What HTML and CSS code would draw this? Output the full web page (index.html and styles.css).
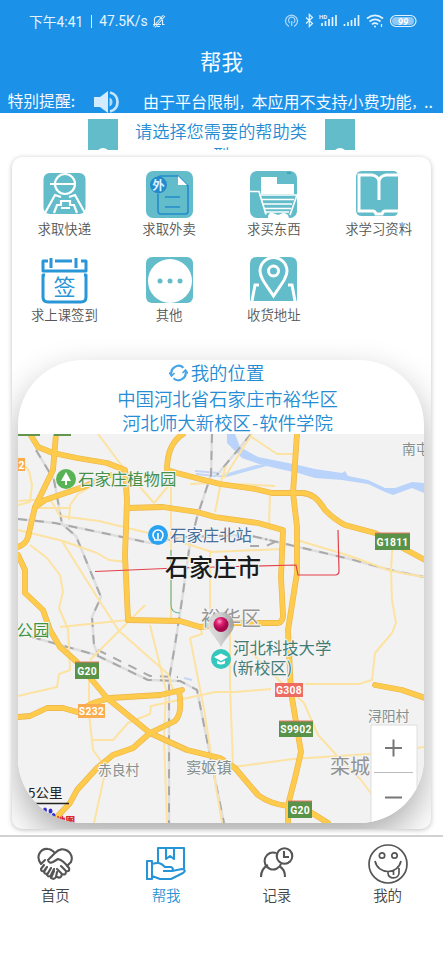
FILE: index.html
```html
<!DOCTYPE html>
<html lang="zh-CN">
<head>
<meta charset="utf-8">
<meta name="viewport" content="width=device-width, initial-scale=1">
<title>帮我</title>
<link rel="stylesheet" href="styles.css">
</head>
<body>
<div class="app">
  <header class="header">
    <div class="status">
      <span class="status-time">下午4:41</span><span class="status-bar"></span><span class="status-time">47.5K/s</span>
      <svg class="mute" width="15" height="16" viewBox="0 0 15 16" fill="none" stroke="#e3f2ff" stroke-width="1.1"><path d="M2 11.5h8M3.5 11V6.5C3.500 2.500 10.500 2.500 10.500 6M11.500 7v4.500h2M6 13.500h3M12.500 2 2.500 13.500M14 3 4 14.500"/></svg>
      <div class="status-right">
        <svg width="133" height="16" viewBox="284 13 133 16" fill="none" stroke="#e3f2ff" stroke-width="1.2">
          <g opacity=".75"><path d="M289 26.500a6 6 0 1 1 5 0M290 23a3.200 3.200 0 1 1 3.500 0M291.700 21v5"/></g>
          <path d="m306 17.500 6.500 6-3.200 3V14.500l3.200 3-6.500 6"/>
          <text class="hd" x="319" y="18.500">HD</text>
          <path stroke-width="1.7" d="M322 26v-3M325.500 26v-5M329 26v-7M332.500 26v-9M336 26v-11M344.500 26v-2M348 26v-4M351.500 26v-6M355 26v-8M358.500 26v-11"/>
          <path stroke-width="1.7" d="M367 18.500c5-4 11-4 16 0M369.500 21.500c4-3 7.500-3 11 0M372 24.300c2-1.600 4-1.600 6 0"/><path d="M375 26.500v.1" stroke-width="2" stroke-linecap="round"/><path d="M381.500 24v3" />
          <rect x="390.500" y="15.500" width="25.500" height="11" rx="5.500"/><rect x="392" y="17" width="22" height="8" rx="4" fill="#8fc8f5" stroke="none"/>
          <text class="pct" x="403" y="25">99</text>
        </svg>
      </div>
    </div>
    <h1 class="title">帮我</h1>
    <div class="notice">
      <span class="notice-label">特别提醒:</span>
      <svg class="speaker" width="27" height="24" viewBox="0 0 27 24"><path d="M1 7h6l8-6v22l-8-6H1z" fill="#d3ebff"/><path d="M16.500 7.500v9c4-1.500 4-7.500 0-9z" fill="#b4dcfb"/><path d="M17 2.500c10 2.500 10 16.500 0 19" fill="none" stroke="#c5e4fd" stroke-width="2.800"/></svg>
      <span class="notice-text">由于平台限制<i>，</i>本应用不支持小费功能<i>，</i>..</span>
    </div>
  </header>

  <section class="prompt">
    <svg width="30" height="31" viewBox="0 0 30 31"><path d="M0 0h30v31H20q-5-4-10 0H0z" fill="#63bcca"/></svg>
    <p class="prompt-text">请选择您需要的帮助类型</p>
    <svg width="30" height="31" viewBox="0 0 30 31"><path d="M0 0h30v31H20q-5-4-10 0H0z" fill="#63bcca"/></svg>
  </section>

  <main class="card">
    <div class="grid">
      <div class="item">
        <svg width="47" height="47" viewBox="0 0 47 47"><rect x="2.500" y="2" width="42" height="41" rx="6" fill="#63bcca"/><g fill="none" stroke="#fff" stroke-width="2.200"><circle cx="24" cy="13" r="10"/><path d="M9 13h25M4 42l10-18 6 2M44 42 34 24l-6 2M13 42l3-8h4v-4h9v4h4l3 8M20 37h9"/></g></svg>
        <span>求取快递</span>
      </div>
      <div class="item">
        <svg width="47" height="47" viewBox="0 0 47 47"><rect width="47" height="47" rx="7" fill="#63bcca"/><g fill="none" stroke="#238bcc" stroke-width="1.600"><path d="M12 23v17q0 3 3 3h24q3 0 3-3V15L32 5H15q-3 0-3 3M19 26h15M19 36h15"/></g><path d="M32 5v9h9z" fill="#fff"/><circle cx="12.500" cy="14" r="8.500" fill="#238bcc"/><text class="out" x="12.500" y="18.500">外</text></svg>
        <span>求取外卖</span>
      </div>
      <div class="item">
        <svg width="47" height="47" viewBox="0 0 47 47"><rect width="47" height="47" rx="7" fill="#63bcca"/><path d="M11 6h16v7h17v10H11zM18 47q0-6 5-5l5 2 5-2q5 0 6 5z" fill="#fff"/><g fill="none" stroke="#fff" stroke-width="1.700"><path d="M0 20.500h9l7 23M9 24h38l-7 20M12 28.500h32M13 33h29M14 37.500h27M16 41h23"/></g><path d="M37 2h4" stroke="#238a9b"/></svg>
        <span>求买东西</span>
      </div>
      <div class="item">
        <svg width="47" height="47" viewBox="0 0 47 47"><path d="M7 0h31q5 0 5 5v35q0 5-5 5H7q-6 0-6-6V6q0-6 6-6z" fill="#63bcca"/><g fill="none" stroke="#fff"><path stroke-width="3" d="M24 29V10Q23 5 17 4H4v36h14q2 0 3 3h6q1-3 3-3h14M24 10q1-5 7-6h13"/></g></svg>
        <span>求学习资料</span>
      </div>
      <div class="item">
        <svg width="47" height="47" viewBox="0 0 47 47"><g fill="none" stroke="#2896d7" stroke-width="3" stroke-linejoin="round"><path d="M7 4H2v10h43V4h-5M14 4h17M10 1v10M35 1v10M4 18H2v22q0 5 5 5h33q5 0 5-5V18h-2"/></g><text class="sign" x="23.500" y="38">签</text></svg>
        <span>求上课签到</span>
      </div>
      <div class="item">
        <svg width="47" height="47" viewBox="0 0 47 47"><rect y="0" width="47" height="46" rx="6" fill="#63bcca"/><circle cx="24" cy="24" r="22" fill="#fff"/><g fill="#63bcca"><circle cx="14" cy="24" r="2.500"/><circle cx="24" cy="24" r="2.500"/><circle cx="34" cy="24" r="2.500"/></g></svg>
        <span>其他</span>
      </div>
      <div class="item">
        <svg width="47" height="47" viewBox="0 0 47 47"><path d="M7 0h33q7 0 7 7v37H0V7q0-7 7-7z" fill="#63bcca"/><g fill="none" stroke="#fff"><path stroke-width="3" d="M23.500 39C14 25 10 20 10 14a13.500 13.500 0 0 1 27 0c0 6-4 11-13.500 25z"/><circle cx="23.500" cy="14" r="5" stroke-width="3"/><path stroke-width="3" d="M9 28H5L2 44M38 28h4l3 16"/></g></svg>
        <span>收货地址</span>
      </div>
    </div>

    <section class="location">
      <div class="address">
        <div class="address-head"><svg width="19" height="18" viewBox="0 0 19 18" fill="none" stroke="#45a5e8" stroke-width="2.100"><path d="M2.800 11.500A7.200 7.200 0 0 1 14.500 3.800M16.200 6.500A7.200 7.200 0 0 1 4.500 14.200"/><path d="m0 8.500 2.500 3.500 3-3M19 9.500 16.500 6l-3 3" stroke-width="1.500"/></svg>我的位置</div>
        <div>中国河北省石家庄市裕华区</div>
        <div>河北师大新校区<span class="dash">-</span>软件学院</div>
      </div>
      <svg class="map" width="406" height="389" viewBox="18 434 406 389">
        <rect x="18" y="434" width="406" height="389" fill="#f2f2f2"/>
        <path class="water" d="M227 434h8l5 13 18 10 40 8 17 4 27 4 3-2 3 5 20 4 17 8h10l17-6 12 1v10l-12-5-19 7-8-3-17-8-26-4-27-2-17-5-36-8-20-7-15-15z"/>
        <path d="M215 477l20-6 21-6 18-1-22 6-25 7z" fill="#bed6fa"/><path d="M195 471l24 2-4 3-19-2M184 678l8 2" stroke="#c6d5f5" stroke-width="2" fill="none"/>
        <g class="rail-bg">
          <path d="M36 450 54 480 59 507 62 524 76 536 101 597 92 617 94 645 98 655"/>
          <path d="M18 519 55 523 127 538 150 543 185 537 248 535 290 545 350 559 390 570 424 577"/>
          <path d="M212 434 211 475 197 517 189 550 182 600 175 645 169 680 169 823"/>
          <path d="M32 637 96 655 148 680 180 681 197 690 212 765 224 823"/>
          <path d="M251 434 217 475"/>
        </g>
        <g class="rail-dash">
          <path d="M36 450 54 480 59 507 62 524 76 536 101 597 92 617 94 645 98 655"/>
          <path d="M18 519 55 523 127 538 150 543 185 537 248 535 290 545 350 559 390 570 424 577"/>
          <path d="M212 434 211 475 197 517 189 550 182 600 175 645 169 680 169 823"/>
          <path d="M32 637 96 655 148 680 180 681 197 690 212 765 224 823"/>
          <path d="M251 434 217 475M98 650 150 676 178 677M250 546h16l9-4-10-3"/>
        </g>
        <g class="minor">
          <path d="M98 434 125 470 154 503M18 458 29 471 32 485 30 502 18 505M18 501 50 499 60 516 99 521 165 537 212 552 282 549M36 508h35M110 476 78 494 70 505 69 520M18 530 63 541 97 553 109 560 127 562M62 541 97 597 119 631M30 545 47 558 60 575 63 592 59 608 68 629 70 670 59 674 57 687 18 696M154 503 171 483 171 550M210 550V615M60 627 128 620M118 630 168 674 173 690"/>
          <path d="M190 484l20-1 65 3M226 466l-4 12-7 34M250 436l27 18h17M270 495l-1 32M252 434l-28 44M297 540l53 16 41 15 33 6M391 570l1 30 4 23-4 10-17 20-3 27-13 4H305M391 570l2-35"/>
          <path d="M90 660 119 631 145 605M171 550v70M150 625l16 65-2 48 3 85M89 668v45l4 37 13 18-12 55M93 740h20l15-17 22-9 1-8 64-14h20l36-3M190 638l14 71 12 78 6 36M190 638l12-4-2-8M230 625v60l3 81-20-1M233 767l60-8 76-5 55-7M249 650l30 30 25 23 14 32 23 25 20 20 24 32"/>
        </g>
        <g class="major-edge">
          <path d="M30 434 38 447 53 453 77 458 107 463 125 470 127 500 125 555 128 620 180 621 200 627 232 623H278Q283 622 283 615L281 577 283 530 258 523 215 517 197 512 163 507 127 508"/>
          <path d="M183 434Q167 444 167 470L177 473 200 479 220 484 255 489 272 493H302Q315 493 325 510 335 520 345 525L375 533 425 560"/>
          <path d="M297 434 293 493 297 527 297 573 288 630 291 692 301 752 295 778 288 805V823"/>
          <path d="M56 434 53 470 35 507 28 537Q26 544 18 547M35 507 45 500 83 487 110 475"/>
          <path d="M18 555 25 570V593L43 610 50 630 60 647 77 662 107 698 150 733 187 750 220 758 235 768 258 795Q270 804 288 806L312 813 328 823"/>
          <path d="M18 717 30 716 47 708H63L77 712 93 703 110 698 160 695 182 690M179 691Q183 713 175 721L150 733 133 748 113 755 97 768 77 790 70 803 55 819M375 685 402 690 425 698"/>
        </g>
        <g class="major">
          <path d="M30 434 38 447 53 453 77 458 107 463 125 470 127 500 125 555 128 620 180 621 200 627 232 623H278Q283 622 283 615L281 577 283 530 258 523 215 517 197 512 163 507 127 508"/>
          <path d="M183 434Q167 444 167 470L177 473 200 479 220 484 255 489 272 493H302Q315 493 325 510 335 520 345 525L375 533 425 560"/>
          <path d="M297 434 293 493 297 527 297 573 288 630 291 692 301 752 295 778 288 805V823"/>
          <path d="M56 434 53 470 35 507 28 537Q26 544 18 547M35 507 45 500 83 487 110 475"/>
          <path d="M18 555 25 570V593L43 610 50 630 60 647 77 662 107 698 150 733 187 750 220 758 235 768 258 795Q270 804 288 806L312 813 328 823"/>
          <path d="M18 717 30 716 47 708H63L77 712 93 703 110 698 160 695 182 690M179 691Q183 713 175 721L150 733 133 748 113 755 97 768 77 790 70 803 55 819M375 685 402 690 425 698"/>
        </g>
        <path d="M171 550v55q0 8 9 8" fill="none" stroke="#6cb7a5" stroke-width="1.200"/>
        <path d="M95 571.500 177 568l119-3 2 10h37q4 0 4-4l-1-41" fill="none" stroke="#e3404b" stroke-width="1.200"/>
        <path d="M18 434h22v2H18zM54 434h17v2H54z" fill="#63964c"/>

        <circle cx="66" cy="479" r="10" fill="#58b355"/><path d="m66 472 5 9h-4v4h-2v-4h-4z" fill="#fff"/>
        <text class="poi green" x="78" y="484.500">石家庄植物园</text>
        <circle cx="158" cy="535" r="10" fill="#29a3f1"/><path d="M155 539a5 5 0 1 1 6 0M158 533v6M154 540h8" fill="none" stroke="#fff" stroke-width="1.600"/>
        <text class="poi blue" x="170" y="540.500">石家庄北站</text>
        <text class="city" x="165" y="576">石家庄市</text>
        <text class="district" x="201" y="625.500">裕华区</text>
        <text class="poi park" x="16.500" y="635.500">公园</text>
        <text class="village" x="402" y="454">南屯</text>
        <text class="village" x="98" y="775">赤良村</text>
        <text class="village wide" x="186" y="773">窦妪镇</text>
        <text class="village" x="368" y="720.500">浔阳村</text>
        <text class="county" x="330" y="774">栾城区</text>
        <circle cx="221" cy="659" r="10" fill="#33c7bd"/><path d="m214 657 7-3.500 7 3.500-7 4zM217 660.500v3q4 2 8 0v-3l-4 2z" fill="#fff"/>
        <text class="poi teal" x="233" y="653.500">河北科技大学</text>
        <text class="poi teal" x="232" y="674">(新校区)</text>

        <g class="shield">
          <g fill="#59934a"><path d="M375 533h35v17h-35zM75 662h24v17H75zM279 721h34v16h-34zM288 801h24v17h-24z"/></g>
          <path d="M275 683h28v14h-28z" fill="#ed6b61"/><path d="M78 704h27v14H78zM18 458h7v13h-7z" fill="#faad50"/>
          <path d="M375 533h35M75 662h24M279 721h34M288 801h24" stroke="#e9775c" stroke-width="1"/>
          <text x="392.500" y="545.500">G1811</text><text x="87" y="674.500">G20</text><text x="296" y="733">S9902</text><text x="300" y="813.500">G20</text><text x="289" y="694">G308</text><text x="91.500" y="715">S232</text><text x="21.500" y="468.500">2</text>
        </g>

        <defs><radialGradient id="ball" cx=".4" cy=".3"><stop offset="0" stop-color="#ff9ac7"/><stop offset=".45" stop-color="#df2272"/><stop offset="1" stop-color="#a6084a"/></radialGradient><linearGradient id="pin"><stop stop-color="#dedede"/><stop offset=".5" stop-color="#ccc"/><stop offset="1" stop-color="#9b9b9b"/></linearGradient></defs>
        <path d="M208 625a13 13 0 0 1 26 0c0 7-9 13-13 22-4-9-13-15-13-22z" fill="url(#pin)" opacity=".9"/><circle cx="221" cy="624.500" r="7.500" fill="url(#ball)"/>

        <text class="scale" x="28" y="798">5公里</text><path d="M34 803.500h35" stroke="#222" stroke-width="1.300"/>
        <g fill="#3430cf"><ellipse cx="45" cy="810" rx="2" ry="2.500"/><ellipse cx="50.500" cy="811" rx="2" ry="2.500"/><ellipse cx="53.500" cy="815.500" rx="2" ry="2.500"/><circle cx="47" cy="817" r="4"/></g><text class="brand" x="56" y="824">地图</text>
        <path d="M371 725h46v98h-46z" fill="#fff" stroke="#dedede"/><path d="M374 772.500h39" stroke="#bbb"/><path d="M385 748h17M393.500 739.500v17M385 797.500h17" stroke="#777" stroke-width="2"/>
      </svg>
    </section>
  </main>

  <nav class="tabs">
    <div class="tab">
      <svg width="38" height="40" viewBox="0 0 38 40" fill="none" stroke="#555" stroke-width="2.100" stroke-linejoin="round" stroke-linecap="round"><path d="M5 20C-1 12 5 4 12 5c3 0 5 2 7 4 8-9 20 0 16 9l-4 4M19 9l-7 7q1 4 5 2l5-3c4 1 8 5 11 9M5 20l4-4M8 21l-3 4q0 3 3 2l3-4M11 23l-3 5q1 3 4 1l3-5M15 24l-4 7q2 3 4 0l3-6M18 27l-3 7q3 2 5-1l1-5M33 24q1 4-3 3l-5-5M30 27q0 5-4 3l-5-5M26 30q-1 5-5 3"/></svg>
      <span>首页</span>
    </div>
    <div class="tab active">
      <svg width="40" height="40" viewBox="0 0 40 40" fill="none" stroke="#2794d5" stroke-width="2.100" stroke-linejoin="round"><path d="M12 18V4h26v21M20 4v11l4-3 4 3V4M1 17h5v18H1zM6 20c7-2 9-1 13 3h6q3 1 1 4h-9M26 27l10-2q5 1 1 4l-12 6H14l-8-3"/></svg>
      <span>帮我</span>
    </div>
    <div class="tab">
      <svg width="38" height="40" viewBox="0 0 38 40" fill="none" stroke="#555" stroke-width="2.100"><path d="M18 9a8.500 8.500 0 1 0 5 11M3 33c0-7 3-10 7-12M21 22c4 2 6 5 6 11"/><circle cx="26.500" cy="12" r="7.800"/><path d="M26 7v6h5"/></svg>
      <span>记录</span>
    </div>
    <div class="tab">
      <svg width="40" height="40" viewBox="0 0 40 40" fill="none" stroke="#555" stroke-width="1.700"><circle cx="20" cy="20" r="19"/><circle cx="14" cy="11.500" r="2.700"/><circle cx="26.500" cy="11.500" r="2.700"/><path d="M7 17c3 14 23 14 26 0M20 27v2c0 7 11 6 11 0v-5M25.500 26v5"/></svg>
      <span>我的</span>
    </div>
  </nav>
</div>
</body>
</html>
```
FILE: styles.css
```css
* { box-sizing: border-box; }
body { margin: 0; background: #fff; font-family: "Noto Sans CJK SC", sans-serif; font-weight: 350; }
svg { display: block; flex: none; }
.app { width: 443px; height: 960px; display: flex; flex-direction: column; overflow: hidden; }

.header { height: 113px; background: #1b92e8; color: #f4faff; display: flex; flex-direction: column; overflow: hidden; flex: none; }
.status { height: 42px; padding: 0 26px 0 29px; display: flex; align-items: center; font-size: 13.8px; color: #e3f2ff; white-space: nowrap; }
.status-time { font-family: Roboto, "Noto Sans CJK SC", sans-serif; font-weight: 400; }
.status-bar { width: 1px; height: 13px; background: #e3f2ff; margin: 0 7px 0 8px; }
.mute { margin-left: 3px; }
.status-right { margin-left: auto; }
.hd { font: 700 6px Roboto, sans-serif; fill: #e3f2ff; stroke: none; }
.pct { font: italic 700 9.5px Roboto, sans-serif; fill: #fff; stroke: none; text-anchor: middle; }
.title { margin: 0; height: 40px; line-height: 38px; font-size: 21.5px; font-weight: 400; text-align: center; }
.notice { height: 31px; padding: 7px 0 0 7.5px; display: flex; font-size: 16px; font-weight: 400; line-height: 24px; white-space: nowrap; }
.notice-label { width: 85.5px; font-size: 15.8px; }
.notice i { font-style: normal; font-size: 12.5px; }
.speaker { margin: 1px 23px 0 0; }

.prompt { height: 44px; padding-top: 6px; display: flex; justify-content: center; flex: none; }
.prompt-text { margin: 0 14px 0 13px; width: 180px; height: 31px; overflow: hidden; text-align: center; font-size: 17.2px; line-height: 23.5px; color: #268cd3; }

.card { width: 419px; height: 672px; margin-left: 12px; border-radius: 10px; overflow: hidden; flex: none; box-shadow: 0 1px 5px rgba(0,0,0,.25); display: flex; flex-direction: column; }
.grid { height: 203px; padding-top: 14px; display: grid; grid-template-columns: repeat(4, 1fr); grid-auto-rows: 86px; flex: none; }
.item { display: flex; flex-direction: column; align-items: center; font-size: 13.4px; line-height: 20px; color: #555; }
.out { font-size: 12.5px; font-weight: 700; fill: #d9f1ff; text-anchor: middle; }
.sign { font-size: 22px; font-weight: 400; fill: #2b96d6; text-anchor: middle; }

.location { width: 406px; height: 463px; margin-left: 6px; border-radius: 65px; overflow: hidden; background: #fff; box-shadow: 0 16px 36px rgba(0,0,0,.32); flex: none; }
.address { height: 74px; padding: 0 0 0 13px; text-align: center; font-size: 18.4px; line-height: 24.7px; color: #268cd3; }
.address-head { display: flex; justify-content: center; align-items: center; gap: 3px; height: 25.5px; padding-right: 22px; }
.dash { padding: 0 1px; }
.water { fill: #b9d3fb; }
.rail-bg { fill: none; stroke: #dedede; stroke-width: 2.5; }
.rail-dash { fill: none; stroke: #a9a9a9; stroke-width: 2; stroke-dasharray: 9 8; }
.minor { fill: none; stroke: #fde3a2; stroke-width: 2; stroke-linejoin: round; }
.major-edge, .major { fill: none; stroke-linejoin: round; stroke-linecap: round; }
.major-edge { stroke: #eab54c; stroke-width: 5.8; }
.major { stroke: #fecb4d; stroke-width: 4.6; }
.map text { paint-order: stroke; stroke: #f5f5f5; stroke-width: 2px; font-weight: 400; }
.map .poi { font-size: 16.4px; }
.map .green { fill: #459149; }
.map .park { fill: #3c953e; }
.map .blue { fill: #466f9c; }
.map .teal { fill: #437c77; }
.map .city { font-size: 24px; font-weight: 500; fill: #1b1b1b; }
.map .district { font-size: 20px; fill: #969696; }
.map .village { font-size: 13.8px; fill: #84908f; }
.map .wide { font-size: 15.2px; }
.map .county { font-size: 20px; fill: #929292; }
.map .scale { font-size: 13.5px; fill: #222; stroke: none; }
.map .brand { font-size: 9.5px; font-weight: 900; fill: #d9262e; stroke: none; }
.map .shield text { font: 700 10.3px Roboto, sans-serif; fill: #fff; stroke: none; text-anchor: middle; letter-spacing: .3px; }

.tabs { margin-top: 6px; border-top: 2px solid #d2d2d2; height: 125px; padding-top: 7px; display: grid; grid-template-columns: repeat(4, 1fr); flex: none; }
.tab { display: flex; flex-direction: column; align-items: center; font-size: 14.5px; line-height: 22px; color: #444; }
.active { color: #2794d5; }
```
